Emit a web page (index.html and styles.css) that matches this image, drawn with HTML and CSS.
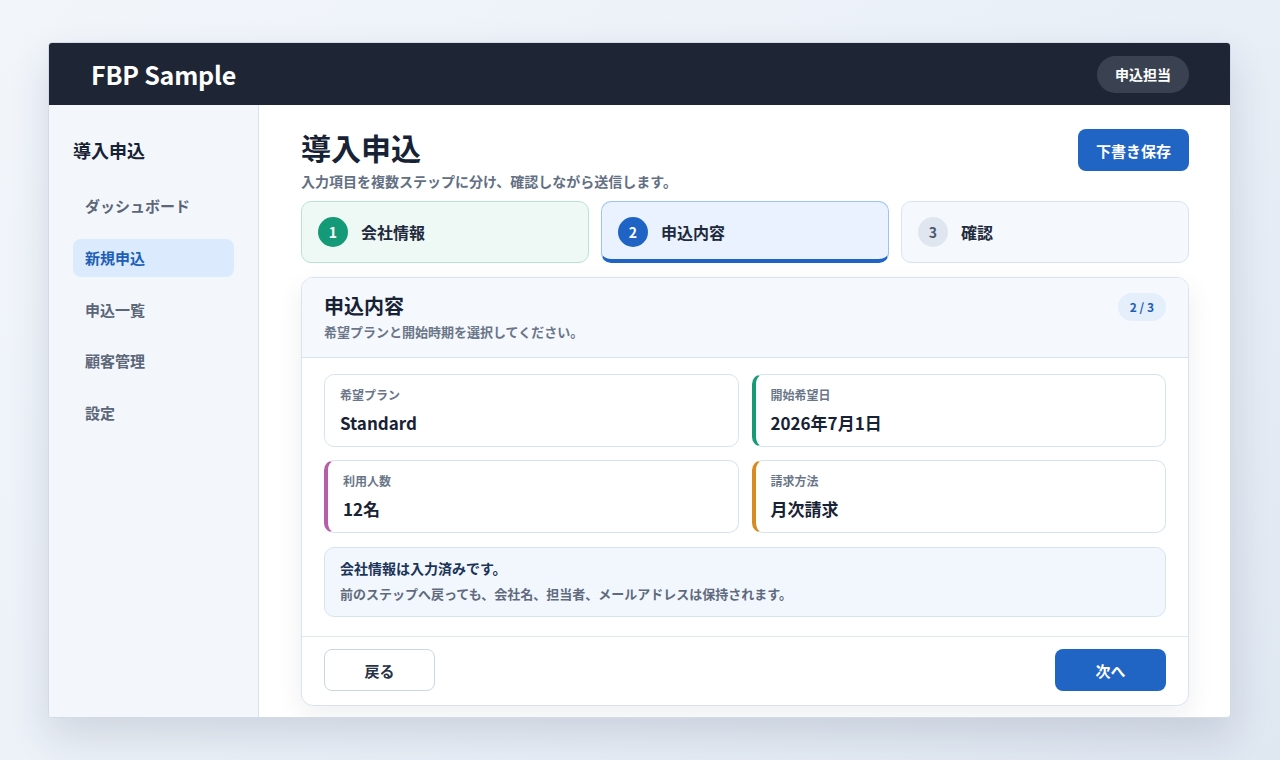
FILE: index.html
```html
<!DOCTYPE html>
<html lang="ja">
<head>
<meta charset="utf-8">
<title>FBP Sample</title>
<link rel="stylesheet" href="styles.css">
</head>
<body>
<div class="window">
  <header class="topbar">
    <div class="brand">FBP Sample</div>
    <div class="role">申込担当</div>
  </header>
  <div class="layout">
    <aside class="sidebar">
      <div class="side-title">導入申込</div>
      <nav class="nav">
        <div class="nav-item">ダッシュボード</div>
        <div class="nav-item active">新規申込</div>
        <div class="nav-item">申込一覧</div>
        <div class="nav-item">顧客管理</div>
        <div class="nav-item">設定</div>
      </nav>
    </aside>
    <main class="main">
      <div class="page-head">
        <div>
          <h1 class="page-title">導入申込</h1>
          <p class="page-sub">入力項目を複数ステップに分け、確認しながら送信します。</p>
        </div>
        <button class="btn btn-primary">下書き保存</button>
      </div>
      <div class="steps">
        <div class="step done"><span class="step-num">1</span><span class="step-label">会社情報</span></div>
        <div class="step current"><span class="step-num">2</span><span class="step-label">申込内容</span></div>
        <div class="step todo"><span class="step-num">3</span><span class="step-label">確認</span></div>
      </div>
      <section class="card">
        <div class="card-head">
          <div>
            <h2 class="card-title">申込内容</h2>
            <p class="card-sub">希望プランと開始時期を選択してください。</p>
          </div>
          <span class="pill">2 / 3</span>
        </div>
        <div class="card-body">
          <div class="fields">
            <div class="field">
              <div class="field-label">希望プラン</div>
              <div class="field-value">Standard</div>
            </div>
            <div class="field accent-green">
              <div class="field-label">開始希望日</div>
              <div class="field-value">2026年7月1日</div>
            </div>
            <div class="field accent-pink">
              <div class="field-label">利用人数</div>
              <div class="field-value">12名</div>
            </div>
            <div class="field accent-orange">
              <div class="field-label">請求方法</div>
              <div class="field-value">月次請求</div>
            </div>
          </div>
          <div class="note">
            <div class="note-title">会社情報は入力済みです。</div>
            <div class="note-text">前のステップへ戻っても、会社名、担当者、メールアドレスは保持されます。</div>
          </div>
        </div>
        <div class="card-foot">
          <button class="btn btn-ghost">戻る</button>
          <button class="btn btn-primary">次へ</button>
        </div>
      </section>
    </main>
  </div>
</div>
</body>
</html>
```

FILE: styles.css
```css
* { box-sizing: border-box; }
html, body { margin: 0; height: 100%; }
body {
  font-family: "Noto Sans CJK JP", "Noto Sans", sans-serif;
  background: linear-gradient(135deg, #f2f6fb 0%, #e9eff7 60%, #dfe7f1 100%);
  padding: 42px 49px 42px 48px;
  color: #172234;
}
.window {
  height: 676px;
  background: #ffffff;
  border: 1px solid #d3dbe6;
  border-radius: 4px;
  overflow: hidden;
  display: flex;
  flex-direction: column;
  box-shadow: 0 18px 40px rgba(30, 45, 70, 0.14);
}
.topbar {
  height: 62px;
  flex: none;
  background: #1e2636;
  display: flex;
  align-items: center;
  justify-content: space-between;
  padding: 0 41px 0 42px;
}
.brand {
  color: #ffffff;
  font-size: 25px;
  font-weight: 700;
  letter-spacing: -0.2px;
}
.role {
  background: #3a4252;
  color: #ffffff;
  font-size: 14px;
  font-weight: 700;
  height: 37px;
  line-height: 37px;
  padding: 0 18px;
  border-radius: 19px;
}
.layout {
  flex: 1;
  display: grid;
  grid-template-columns: 210px 1fr;
  min-height: 0;
}
.sidebar {
  background: #f3f7fc;
  border-right: 1px solid #d9e3ef;
  padding: 32px 24px;
}
.side-title {
  font-size: 18px;
  line-height: 26px;
  font-weight: 700;
  color: #172234;
}
.nav {
  margin-top: 24px;
  display: flex;
  flex-direction: column;
  gap: 13.8px;
}
.nav-item {
  height: 38px;
  line-height: 38px;
  padding: 0 12px;
  border-radius: 8px;
  font-size: 15px;
  font-weight: 700;
  color: #5b6678;
}
.nav-item.active {
  background: #dbeafd;
  color: #1d5fb5;
}
.main {
  padding: 24px 41px 24px 42px;
  overflow: hidden;
}
.page-head {
  display: flex;
  justify-content: space-between;
  align-items: flex-start;
}
.page-title {
  margin: 0;
  font-size: 30px;
  line-height: 36px;
  font-weight: 700;
  color: #172234;
}
.page-sub {
  margin: 8px 0 0;
  font-size: 14px;
  line-height: 16px;
  font-weight: 700;
  color: #637083;
}
.btn {
  font-family: inherit;
  width: 111px;
  height: 42px;
  border-radius: 8px;
  font-size: 15px;
  font-weight: 700;
  cursor: pointer;
}
.btn-primary {
  background: #2165c4;
  color: #ffffff;
  border: none;
}
.btn-ghost {
  background: #ffffff;
  color: #263347;
  border: 1px solid #cbd6e3;
}
.steps {
  margin-top: 12px;
  display: grid;
  grid-template-columns: repeat(3, 1fr);
  gap: 12px;
}
.step {
  height: 62px;
  border-radius: 10px;
  border: 1px solid #d9e3ef;
  display: flex;
  align-items: center;
  padding: 0 16px;
  gap: 13px;
}
.step-num {
  width: 30px;
  height: 30px;
  border-radius: 50%;
  display: flex;
  align-items: center;
  justify-content: center;
  font-size: 14px;
  font-weight: 700;
  flex: none;
}
.step-label {
  font-size: 16px;
  font-weight: 700;
  color: #1e2a3c;
}
.step.done {
  background: #eef8f4;
  border-color: #b9e3d2;
}
.step.done .step-num { background: #159a77; color: #ffffff; }
.step.current {
  background: #e9f2fe;
  border-color: #9cc3f3;
  border-bottom: 4px solid #1f64c4;
  padding-top: 3px;
}
.step.current .step-num { background: #1f64c4; color: #ffffff; }
.step.todo { background: #f5f8fc; }
.step.todo .step-num { background: #dfe6f0; color: #4b5a70; }
.card {
  margin-top: 14px;
  border: 1px solid #d9e3ef;
  border-radius: 12px;
  background: #ffffff;
  overflow: hidden;
  box-shadow: 0 10px 28px rgba(20, 35, 60, 0.07);
}
.card-head {
  background: #f5f9fe;
  border-bottom: 1px solid #d9e3ef;
  padding: 14px 22px 16px;
  display: flex;
  justify-content: space-between;
  align-items: flex-start;
}
.card-title {
  margin: 0;
  font-size: 20px;
  line-height: 28px;
  font-weight: 700;
  color: #172234;
}
.card-sub {
  margin: 2px 0 0;
  font-size: 13px;
  line-height: 19px;
  font-weight: 700;
  color: #6a7688;
}
.pill {
  margin-top: 1px;
  background: #e5effc;
  color: #1d5fb5;
  font-size: 12px;
  font-weight: 700;
  height: 28px;
  line-height: 28px;
  padding: 0 12px;
  border-radius: 14px;
}
.card-body {
  padding: 16px 22px 19px;
}
.fields {
  display: grid;
  grid-template-columns: 1fr 1fr;
  gap: 13px;
}
.field {
  height: 73px;
  border: 1px solid #d9e3ef;
  border-radius: 10px;
  padding: 12px 15px 11px;
}
.field.accent-green { border-left: 4px solid #169b77; }
.field.accent-pink { border-left: 4px solid #b85ea6; }
.field.accent-orange { border-left: 4px solid #d88b1e; }
.field-label {
  font-size: 12px;
  line-height: 16px;
  font-weight: 700;
  color: #6a7688;
}
.field-value {
  margin-top: 8px;
  font-size: 17px;
  line-height: 24px;
  font-weight: 700;
  color: #172234;
}
.note {
  margin-top: 14px;
  background: #f2f7fe;
  border: 1px solid #d5e4f5;
  border-radius: 10px;
  padding: 10px 15px 13px;
}
.note-title {
  font-size: 14px;
  line-height: 20px;
  font-weight: 700;
  color: #1b3458;
}
.note-text {
  margin-top: 7px;
  font-size: 13px;
  line-height: 18px;
  font-weight: 700;
  color: #5f6b7d;
}
.card-foot {
  border-top: 1px solid #dfe7f1;
  padding: 12px 22px 14px;
  display: flex;
  justify-content: space-between;
}
```
